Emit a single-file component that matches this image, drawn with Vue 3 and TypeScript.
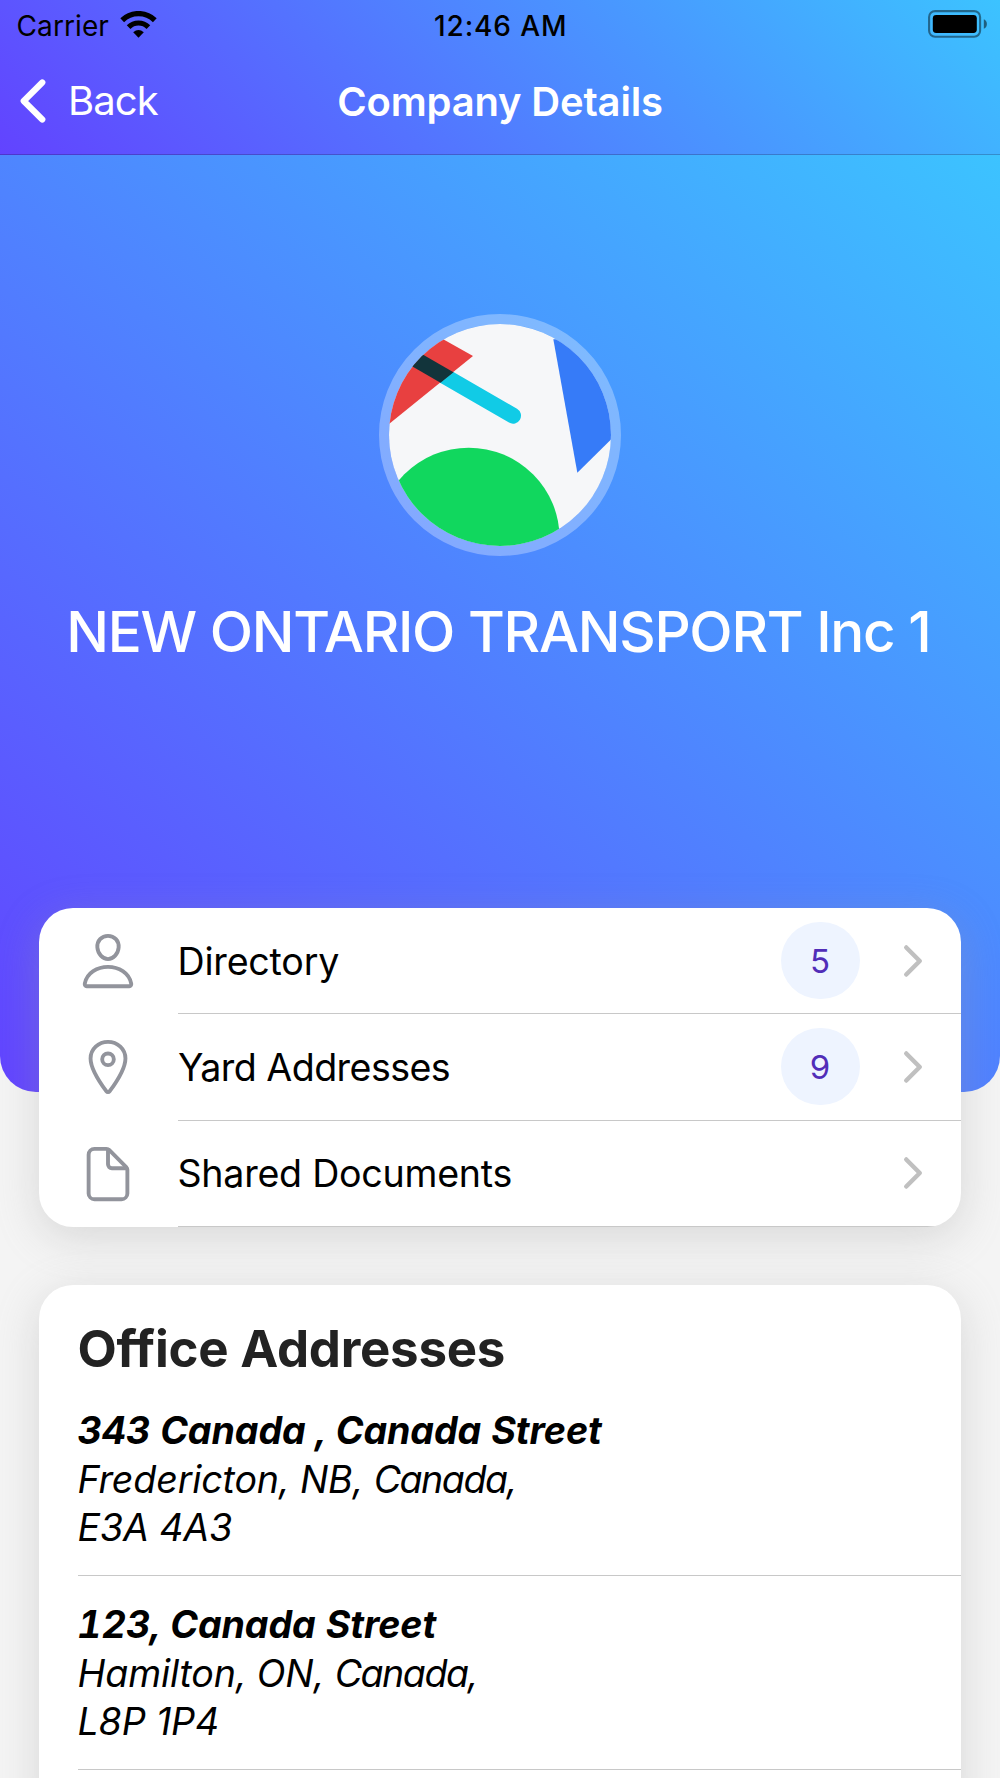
<script setup lang="ts">
type IconName = 'person' | 'location' | 'document'

interface MenuRow {
  label: string
  icon: IconName
  count?: number
}

interface Address {
  street: string
  city: string
  country: string
  postal: string
}

const menu: MenuRow[] = [
  { label: 'Directory', icon: 'person', count: 5 },
  { label: 'Yard Addresses', icon: 'location', count: 9 },
  { label: 'Shared Documents', icon: 'document' },
]

const addresses: Address[] = [
  { street: '343 Canada , Canada Street', city: 'Fredericton, NB,', country: 'Canada,', postal: 'E3A 4A3' },
  { street: '123, Canada Street', city: 'Hamilton, ON,', country: 'Canada,', postal: 'L8P 1P4' },
]
</script>

<template>
  <div class="page">
    <header class="header">
      <div class="status">
        <div class="carrier">
          <span>Carrier</span>
          <svg class="wifi" viewBox="0 0 37 27">
            <path d="M2.2 9.2 A23.5 23.5 0 0 1 34.8 9.2" fill="none" stroke="#000" stroke-width="5.4" />
            <path d="M8.6 16.1 A14 14 0 0 1 28.4 16.1" fill="none" stroke="#000" stroke-width="5.2" />
            <path d="M13.2 21.2 Q18.5 16.6 23.8 21.2 L18.5 26.8 Z" fill="#000" />
          </svg>
        </div>
        <div class="time">12:46 AM</div>
        <div class="power">
          <svg class="battery" viewBox="0 0 60 28">
            <rect x="1.1" y="1.1" width="51" height="25.6" rx="6" fill="none" stroke="#000" stroke-opacity=".45" stroke-width="2.1" />
            <rect x="4.8" y="5" width="44" height="18" rx="3.4" />
            <path d="M55.8 9.2 Q58.9 10.6 58.9 14 Q58.9 17.4 55.8 18.8 Z" fill-opacity=".5" />
          </svg>
        </div>
      </div>
      <div class="toolbar">
        <a class="back">
          <svg viewBox="0 0 512 512"><path d="M328 112L184 256l144 144" /></svg>
          <span>Back</span>
        </a>
        <h1 class="heading">Company Details</h1>
        <span></span>
      </div>
    </header>

    <section class="hero">
      <div class="avatar">
        <svg viewBox="0 0 666 666">
          <rect width="666" height="666" fill="#f6f7f9" />
          <line x1="372" y1="275" x2="-28" y2="44" stroke="#11cbe6" stroke-width="48" stroke-linecap="round" />
          <path d="M252 96 L81 0 H-60 V349 Z" fill="#e84040" />
          <path d="M193.5 144.5 L154.5 176 L56 119.2 L80 80 L102.5 92 Z" fill="#12343b" />
          <circle cx="239" cy="644" r="273" fill="#11d75e" />
          <path d="M493 46 H743 V271 L565 446 Z" fill="#367bf8" />
        </svg>
      </div>
      <h2 class="company">NEW ONTARIO TRANSPORT Inc 1</h2>
    </section>

    <section class="card menu">
      <div v-for="row in menu" :key="row.label" class="row">
        <svg class="icon" viewBox="0 0 512 512">
          <template v-if="row.icon === 'person'">
            <path d="M344 144c-3.92 52.87-44 96-88 96s-84.15-43.12-88-96c-4-55 35-96 88-96s92 42 88 96z" />
            <path d="M256 304c-87 0-175.3 48-191.64 138.6C62.39 453.52 68.57 464 80 464h352c11.44 0 17.62-10.48 15.65-21.4C431.3 352 343 304 256 304z" />
          </template>
          <template v-else-if="row.icon === 'location'">
            <path d="M256 48c-79.5 0-144 61.39-144 137 0 87 96 224.87 131.25 272.49a15.77 15.77 0 0025.5 0C304 409.89 400 272.07 400 185c0-75.61-64.5-137-144-137z" />
            <circle cx="256" cy="192" r="48" />
          </template>
          <template v-else>
            <path d="M416 221.25V416a48 48 0 01-48 48H144a48 48 0 01-48-48V96a48 48 0 0148-48h98.75a32 32 0 0122.62 9.37l141.26 141.26a32 32 0 019.37 22.62z" />
            <path d="M256 56v120a32 32 0 0032 32h120" />
          </template>
        </svg>
        <div class="row-body">
          <span class="label" :class="row.icon">{{ row.label }}</span>
          <span v-if="row.count" class="badge">{{ row.count }}</span>
          <svg class="chevron" viewBox="0 0 512 512"><path d="M184 112l144 144-144 144" /></svg>
        </div>
      </div>
    </section>

    <section class="card offices">
      <h3>Office Addresses</h3>
      <address v-for="a in addresses" :key="a.postal">
        <b>{{ a.street }}</b>
        <span class="city">{{ a.city }} <span class="country">{{ a.country }}</span></span>
        <span class="postal">{{ a.postal }}</span>
      </address>
    </section>
  </div>
</template>

<style>
body {
  margin: 0;
  background: #f4f4f4;
}
</style>

<style scoped>
.page {
  width: 1000px;
  height: 1778px;
  overflow: hidden;
  background: #f4f4f4;
  font-family: Inter, 'Liberation Sans', sans-serif;
  color: #000;
}
.header {
  box-sizing: border-box;
  height: 155px;
  background: linear-gradient(45deg, #6243ff, #3cc3ff);
  border-bottom: 1px solid rgba(0, 0, 0, 0.2);
  background-origin: border-box;
}
.status {
  display: grid;
  grid-template-columns: 1fr auto 1fr;
  align-items: center;
  height: 48px;
  padding: 0 12px 0 16.5px;
}
.carrier {
  display: flex;
  align-items: center;
  gap: 11px;
  font-size: 28px;
  letter-spacing: 0.1px;
}
.carrier span,
.time {
  line-height: 34px;
  padding-top: 3px;
}
.wifi {
  width: 37px;
  height: 27px;
}
.time {
  margin-right: 3px;
  font-size: 28px;
  font-weight: 500;
  letter-spacing: 0.9px;
}
.power {
  display: flex;
  justify-content: flex-end;
}
.battery {
  width: 60px;
  height: 28px;
}
.toolbar {
  display: grid;
  grid-template-columns: 1fr auto 1fr;
  align-items: center;
  height: 106px;
  color: #fff;
}
.back {
  display: flex;
  align-items: center;
  gap: 2px;
  font-size: 40px;
  line-height: 50px;
  letter-spacing: -0.9px;
}
.back svg {
  width: 66px;
  height: 66px;
}
.toolbar svg path,
.icon,
.chevron {
  fill: none;
  stroke-linecap: round;
  stroke-linejoin: round;
}
.back path {
  stroke: #fff;
  stroke-width: 48;
}
.heading {
  margin: 0;
  padding-top: 2px;
  font-size: 40px;
  font-weight: 600;
  letter-spacing: -0.19px;
  line-height: 50px;
}
.hero {
  box-sizing: border-box;
  height: 937px;
  padding-top: 159px;
  border-radius: 0 0 36px 36px;
  background: linear-gradient(41deg, #6243ff, #3cc3ff);
  display: flex;
  flex-direction: column;
  align-items: center;
}
.avatar {
  width: 222px;
  height: 222px;
  border: 10px solid rgba(255, 255, 255, 0.3);
  border-radius: 50%;
  background-clip: padding-box;
}
.avatar svg {
  display: block;
  width: 222px;
  height: 222px;
  border-radius: 50%;
}
.company {
  margin: 40px 3.5px 0 0;
  font-size: 56.5px;
  font-weight: 500;
  line-height: 72px;
  letter-spacing: -1.27px;
  color: #fff;
  white-space: nowrap;
}
.card {
  position: relative;
  margin: 0 39px;
  border-radius: 34px;
  background: #fff;
  box-shadow: 0 10px 43px rgba(155, 155, 155, 0.32);
  overflow: hidden;
}
.menu {
  margin-top: -184px;
}
.row {
  display: flex;
  align-items: center;
  height: 106.3px;
  padding-left: 38px;
}
.icon {
  width: 62px;
  height: 62px;
  stroke: #92949c;
  stroke-width: 32;
}
.row-body {
  box-sizing: border-box;
  flex: 1;
  display: flex;
  align-items: center;
  height: 100%;
  margin-left: 39px;
  padding-right: 24.5px;
  border-bottom: 1px solid #c8c8c8;
}
.label {
  flex: 1;
  padding-top: 2px;
  font-size: 37.6px;
  line-height: 50px;
}
.person {
  margin-left: -0.5px;
  letter-spacing: -0.2px;
}
.location {
  letter-spacing: -0.55px;
}
.document {
  margin-left: -0.5px;
  letter-spacing: -0.25px;
}
.badge {
  width: 79px;
  height: 77px;
  margin-right: 29px;
  border-radius: 38.5px;
  background: #eef4ff;
  color: #512db8;
  font-size: 33px;
  line-height: 78px;
  text-align: center;
}
.chevron {
  width: 48px;
  height: 48px;
  stroke: #c0c0c0;
  stroke-width: 48;
}
.offices {
  margin-top: 58px;
  padding: 33px 0 60px 38.5px;
}
h3 {
  margin: 0 0 2px;
  font-size: 51px;
  font-weight: 700;
  line-height: 62px;
  letter-spacing: -0.25px;
  color: #222;
}
address {
  display: flex;
  flex-direction: column;
  padding: 25.5px 0 22.3px;
  font-size: 37.6px;
  line-height: 48.4px;
  border-bottom: 1px solid #c8c8c8;
}
address b {
  font-weight: 700;
  font-variant-numeric: tabular-nums;
  letter-spacing: -0.08px;
}
.city {
  letter-spacing: -0.15px;
}
.country {
  letter-spacing: -1.5px;
}
.postal {
  letter-spacing: -0.15px;
}
</style>
